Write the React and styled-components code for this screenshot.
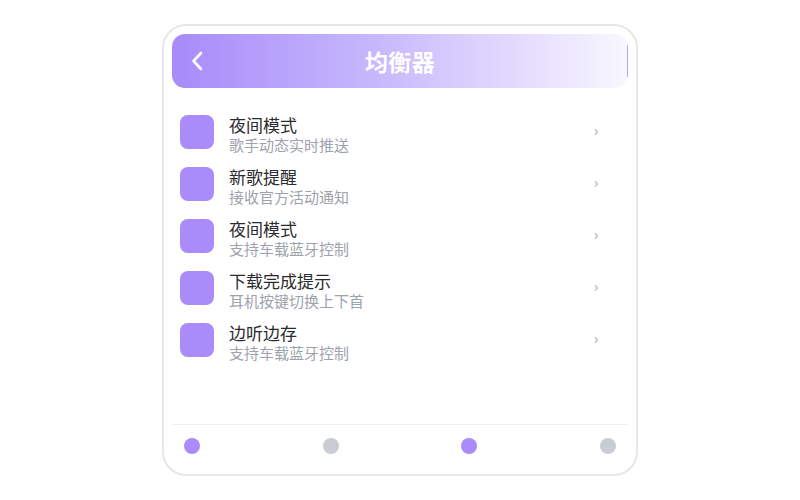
import styled, { createGlobalStyle } from "styled-components";

const GlobalStyle = createGlobalStyle`
  html, body {
    margin: 0;
    padding: 0;
    background: #ffffff;
    font-family: "Noto Sans CJK SC", "Noto Sans", sans-serif;
  }
`;

const Page = styled.div`
  width: 800px;
  height: 500px;
  display: flex;
  align-items: center;
  justify-content: center;
`;

const Card = styled.div`
  width: 476px;
  height: 452px;
  box-sizing: border-box;
  border: 2px solid #e6e6eb;
  border-radius: 24px;
  padding: 8px;
  display: flex;
  flex-direction: column;
  background: #fff;
`;

const Header = styled.div`
  height: 54px;
  flex-shrink: 0;
  border-radius: 13px;
  background: linear-gradient(90deg, #a78bfa 0%, #c7b8fc 45%, #f9f7ff 100%);
  display: flex;
  align-items: center;
  padding-left: 16px;
`;

const BackButton = styled.div`
  width: 18px;
  height: 24px;
  display: flex;
  align-items: center;
  justify-content: center;
`;

const Title = styled.div`
  flex: 1;
  text-align: center;
  color: #fff;
  font-size: 23px;
  font-weight: 700;
  letter-spacing: 0.3px;
`;

const HeaderEdge = styled.div`
  width: 34px;
  height: 32px;
  box-sizing: border-box;
  border-right: 1px solid #b7a2fb;
`;

const List = styled.div`
  flex: 1;
  padding: 18px 8px 0;
  display: flex;
  flex-direction: column;
`;

const Row = styled.div`
  height: 52px;
  display: flex;
  align-items: flex-start;
  padding-top: 9px;
  box-sizing: border-box;
`;

const Swatch = styled.div`
  width: 34px;
  height: 34px;
  border-radius: 8px;
  background: #a98bfa;
  flex-shrink: 0;
`;

const Texts = styled.div`
  flex: 1;
  margin-left: 15px;
  display: flex;
  flex-direction: column;
  margin-top: -1px;
`;

const RowTitle = styled.div`
  font-size: 17px;
  line-height: 21px;
  color: #2b2b2e;
`;

const RowSub = styled.div`
  font-size: 15px;
  line-height: 19px;
  color: #9ea2ab;
`;

const Arrow = styled.div`
  width: 20px;
  margin-right: 14px;
  margin-top: 4px;
  color: #a3a6ad;
  font-size: 15px;
  text-align: center;
`;

const Footer = styled.div`
  border-top: 1px solid #ececf1;
  margin: 0 1px;
  padding: 13px 11px 12px;
  display: flex;
  justify-content: space-between;
`;

const Dot = styled.div`
  width: 16px;
  height: 16px;
  border-radius: 50%;
  background: ${(p) => (p.$active ? "#a98bfa" : "#c9ccd2")};
`;

const items = [
  { title: "夜间模式", sub: "歌手动态实时推送" },
  { title: "新歌提醒", sub: "接收官方活动通知" },
  { title: "夜间模式", sub: "支持车载蓝牙控制" },
  { title: "下载完成提示", sub: "耳机按键切换上下首" },
  { title: "边听边存", sub: "支持车载蓝牙控制" },
];

export default function App() {
  return (
    <>
      <GlobalStyle />
      <Page>
        <Card>
          <Header>
            <BackButton>
              <svg width="12" height="20" viewBox="0 0 12 20" fill="none">
                <path d="M10 2 L2.5 10 L10 18" stroke="#fff" strokeWidth="2.6" strokeLinecap="round" strokeLinejoin="round" />
              </svg>
            </BackButton>
            <Title>均衡器</Title>
            <HeaderEdge />
          </Header>
          <List>
            {items.map((it, i) => (
              <Row key={i}>
                <Swatch />
                <Texts>
                  <RowTitle>{it.title}</RowTitle>
                  <RowSub>{it.sub}</RowSub>
                </Texts>
                <Arrow>›</Arrow>
              </Row>
            ))}
          </List>
          <Footer>
            <Dot $active />
            <Dot />
            <Dot $active />
            <Dot />
          </Footer>
        </Card>
      </Page>
    </>
  );
}
